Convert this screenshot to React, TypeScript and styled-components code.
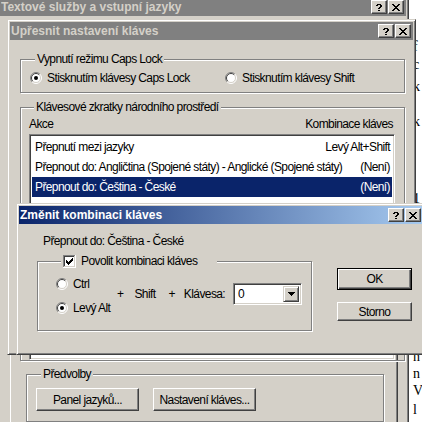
import styled, { createGlobalStyle } from 'styled-components';

const GlobalStyle = createGlobalStyle`
  html, body {
    margin: 0;
    padding: 0;
  }
  body {
    width: 422px;
    height: 422px;
    overflow: hidden;
    background: #fff;
    font-family: "Liberation Sans", Arial, sans-serif;
    font-size: 12px;
    letter-spacing: -0.6px;
    color: #000;
  }
`;

const Desktop = styled.div`
  position: relative;
  width: 422px;
  height: 422px;
  overflow: hidden;
  background: #fff;
`;

const Document = styled.div`
  padding: 0 0 0 413px;
  font-family: "Liberation Serif", "Times New Roman", serif;
  font-size: 14px;
  line-height: 17px;
  letter-spacing: 0;
  white-space: nowrap;
`;

const DocLine = styled.div<{ $mt: number }>`
  margin-top: ${(p) => p.$mt}px;
`;

const Window = styled.div<{ $x: number; $y: number; $w: number; $h: number }>`
  position: absolute;
  left: ${(p) => p.$x}px;
  top: ${(p) => p.$y}px;
  width: ${(p) => p.$w}px;
  height: ${(p) => p.$h}px;
  box-sizing: border-box;
  display: flex;
  flex-direction: column;
  padding: 2px;
  background: #d4d0c8;
  border: 1px solid;
  border-color: #d4d0c8 #404040 #404040 #d4d0c8;
  box-shadow: inset 1px 1px #fff, inset -1px -1px #808080;
`;

const TitleBar = styled.div<{ $active?: boolean }>`
  flex: none;
  height: 18px;
  margin-bottom: 1px;
  padding: 0 2px 0 1px;
  display: flex;
  align-items: center;
  background: ${(p) => (p.$active ? 'linear-gradient(to right, #0a246a, #a6caf0)' : '#808080')};
  color: ${(p) => (p.$active ? '#fff' : '#d4d0c8')};
  font-size: 12px;
  font-weight: bold;
  letter-spacing: 0;
`;

const TitleText = styled.span`
  flex: 1;
  white-space: nowrap;
  overflow: hidden;
`;

const CaptionButtons = styled.div`
  display: flex;
  gap: 1px;
`;

const CaptionButton = styled.div`
  width: 16px;
  height: 14px;
  box-sizing: border-box;
  display: flex;
  align-items: center;
  justify-content: center;
  background: #d4d0c8;
  border: 1px solid;
  border-color: #fff #404040 #404040 #fff;
  box-shadow: inset -1px -1px #808080;
`;

const Client = styled.div<{ $pad: string }>`
  flex: 1;
  display: flex;
  flex-direction: column;
  padding: ${(p) => p.$pad};
  min-height: 0;
`;

const Group = styled.fieldset<{ $mt?: number; $pad: string }>`
  margin: ${(p) => p.$mt ?? 0}px 0 0 0;
  padding: ${(p) => p.$pad};
  min-width: 0;
  box-sizing: border-box;
  border: 1px solid #808080;
  box-shadow: inset 1px 1px #fff, 1px 1px #fff;
`;

const Legend = styled.legend<{ $pr?: number }>`
  margin-left: 5px;
  padding: 0 ${(p) => p.$pr ?? 2}px 0 2px;
  height: 14px;
  line-height: 14px;
  background: #d4d0c8;
  display: flex;
  align-items: center;
  gap: 5px;
`;

const RadioRow = styled.div`
  display: flex;
  align-items: center;
  height: 16px;
`;

const Option = styled.label<{ $w?: number }>`
  display: flex;
  align-items: center;
  gap: 5px;
  width: ${(p) => (p.$w ? `${p.$w}px` : 'auto')};
  height: 14px;
  line-height: 14px;
  white-space: nowrap;
`;

const ListHeader = styled.div`
  display: flex;
  justify-content: space-between;
  height: 14px;
  line-height: 14px;
  padding-right: 2px;
`;

const ListBox = styled.div`
  margin-top: 3px;
  height: 220px;
  background: #fff;
  border: 1px solid;
  border-color: #808080 #fff #fff #808080;
  box-shadow: inset 1px 1px #404040, inset -1px -1px #d4d0c8;
  padding: 2px;
`;

const ListRow = styled.div<{ $selected?: boolean }>`
  height: 20px;
  display: flex;
  align-items: center;
  justify-content: space-between;
  padding: 0 2px 0 3px;
  white-space: nowrap;
  background: ${(p) => (p.$selected ? '#0a246a' : 'transparent')};
  color: ${(p) => (p.$selected ? '#fff' : '#000')};
`;

const TabPanel = styled.div`
  flex: 1;
  display: flex;
  flex-direction: column;
  padding: 0 13px 0 15px;
  border: 1px solid;
  border-color: #fff #404040 #404040 #fff;
  box-shadow: inset -1px -1px #808080;
`;

const PanelSpacer = styled.div`
  height: 343px;
  flex: none;
`;

const ButtonRow = styled.div`
  display: flex;
  gap: 14px;
`;

const PushButton = styled.div<{ $w: number; $h?: number; $default?: boolean }>`
  width: ${(p) => p.$w}px;
  height: ${(p) => p.$h ?? 23}px;
  box-sizing: border-box;
  display: flex;
  align-items: center;
  justify-content: center;
  white-space: nowrap;
  background: #d4d0c8;
  border: 1px solid;
  border-color: ${(p) => (p.$default ? '#000' : '#fff #404040 #404040 #fff')};
  box-shadow: ${(p) =>
    p.$default
      ? 'inset 1px 1px #fff, inset -1px -1px #404040, inset -2px -2px #808080'
      : 'inset -1px -1px #808080'};
`;

const DialogBody = styled.div`
  display: flex;
  padding: 9px 0 0 18px;
`;

const LeftColumn = styled.div`
  width: 275px;
  display: flex;
  flex-direction: column;
`;

const Caption = styled.div`
  margin-left: 6px;
  height: 14px;
  line-height: 14px;
`;

const KeyRow = styled.div`
  display: flex;
  align-items: center;
`;

const ModifierColumn = styled.div`
  width: 55px;
  display: flex;
  flex-direction: column;
  gap: 10px;
`;

const KeyParts = styled.div`
  display: flex;
  align-items: center;
  margin-bottom: 4px;
`;

const KeyText = styled.span<{ $ml: number }>`
  margin-left: ${(p) => p.$ml}px;
  white-space: nowrap;
`;

const Combo = styled.div`
  margin-left: 8px;
  width: 69px;
  height: 22px;
  box-sizing: border-box;
  display: flex;
  align-items: center;
  padding: 2px;
  background: #fff;
  border: 1px solid;
  border-color: #808080 #fff #fff #808080;
  box-shadow: inset 1px 1px #404040, inset -1px -1px #d4d0c8;
`;

const ComboValue = styled.span`
  flex: 1;
  padding-left: 2px;
`;

const DropButton = styled.div`
  width: 16px;
  height: 100%;
  box-sizing: border-box;
  display: flex;
  align-items: center;
  justify-content: center;
  background: #d4d0c8;
  border: 1px solid;
  border-color: #d4d0c8 #404040 #404040 #d4d0c8;
  box-shadow: inset 1px 1px #fff, inset -1px -1px #808080;
`;

const RightColumn = styled.div`
  margin-left: 25px;
  padding-top: 34px;
  display: flex;
  flex-direction: column;
  gap: 12px;
`;

const HelpGlyph = () => (
  <svg width="6" height="7" viewBox="0 0 6 7" shapeRendering="crispEdges">
    <path d="M1 0h4v1H1zM0 1h2v1H0zM4 1h2v2H4zM3 3h2v1H3zM2 4h2v1H2zM2 6h2v1H2z" fill="#000" />
  </svg>
);

const CloseGlyph = () => (
  <svg width="8" height="7" viewBox="0 0 8 7" shapeRendering="crispEdges">
    <path
      d="M0 0h2v1H0zM6 0h2v1H6zM1 1h2v1H1zM5 1h2v1H5zM2 2h4v1H2zM3 3h2v1H3zM2 4h4v1H2zM1 5h2v1H1zM5 5h2v1H5zM0 6h2v1H0zM6 6h2v1H6z"
      fill="#000"
    />
  </svg>
);

const DropArrow = () => (
  <svg width="7" height="4" viewBox="0 0 7 4" shapeRendering="crispEdges">
    <path d="M0 0h7v1H0zM1 1h5v1H1zM2 2h3v1H2zM3 3h1v1H3z" fill="#000" />
  </svg>
);

const Radio = ({ checked }: { checked?: boolean }) => (
  <svg width="12" height="12" viewBox="0 0 12 12">
    <circle cx="6" cy="6" r="5" fill="#fff" />
    <path d="M2.1 9.9A5.5 5.5 0 0 1 9.9 2.1" fill="none" stroke="#808080" />
    <path d="M2.8 9.2A4.5 4.5 0 0 1 9.2 2.8" fill="none" stroke="#404040" />
    <path d="M9.9 2.1A5.5 5.5 0 0 1 2.1 9.9" fill="none" stroke="#fff" />
    <path d="M9.2 2.8A4.5 4.5 0 0 1 2.8 9.2" fill="none" stroke="#d4d0c8" />
    {checked && <circle cx="6" cy="6" r="2" fill="#000" />}
  </svg>
);

const CheckBox = () => (
  <svg width="13" height="13" viewBox="0 0 13 13" shapeRendering="crispEdges">
    <rect x="0" y="0" width="13" height="13" fill="#fff" />
    <path d="M0 0h12v1H1v11H0z" fill="#808080" />
    <path d="M1 1h10v1H2v9H1z" fill="#404040" />
    <path d="M12 0h1v13H0v-1h12z" fill="#fff" />
    <path d="M11 1h1v11H1v-1h10z" fill="#d4d0c8" />
    <path
      d="M9 3h1v1H9zM8 4h2v1H8zM3 5h1v1H3zM7 5h3v1H7zM3 6h2v1H3zM6 6h3v1H6zM3 7h5v1H3zM4 8h3v1H4zM5 9h1v1H5z"
      fill="#000"
    />
  </svg>
);

const Caption3Buttons = () => (
  <CaptionButtons>
    <CaptionButton>
      <HelpGlyph />
    </CaptionButton>
    <CaptionButton>
      <CloseGlyph />
    </CaptionButton>
  </CaptionButtons>
);

export default function App() {
  return (
    <Desktop>
      <GlobalStyle />
      <Document>
        <DocLine $mt={38}>f</DocLine>
        <DocLine $mt={1}>c</DocLine>
        <DocLine $mt={5}>k</DocLine>
        <DocLine $mt={18}>k</DocLine>
        <DocLine $mt={60}>1</DocLine>
        <DocLine $mt={141}>n</DocLine>
        <DocLine $mt={0}>n</DocLine>
        <DocLine $mt={0}>V</DocLine>
        <DocLine $mt={2}>l</DocLine>
      </Document>

      <Window $x={-3} $y={-5} $w={412} $h={440}>
        <TitleBar>
          <TitleText>Textové služby a vstupní jazyky</TitleText>
          <Caption3Buttons />
        </TitleBar>
        <Client $pad="6px 8px 0 10px">
          <TabPanel>
            <PanelSpacer />
            <Group $pad="7px 0 10px 9px">
              <Legend>Předvolby</Legend>
              <ButtonRow>
                <PushButton $w={103}>Panel jazyků...</PushButton>
                <PushButton $w={103}>Nastavení kláves...</PushButton>
              </ButtonRow>
            </Group>
          </TabPanel>
        </Client>
      </Window>

      <Window $x={7} $y={19} $w={409} $h={336}>
        <TitleBar>
          <TitleText>Upřesnit nastavení kláves</TitleText>
          <Caption3Buttons />
        </TitleBar>
        <Client $pad="11px 8px 0 10px">
          <Group $pad="4px 0 6px 9px">
            <Legend>Vypnutí režimu Caps Lock</Legend>
            <RadioRow>
              <Option $w={195}>
                <Radio checked />
                Stisknutím klávesy Caps Lock
              </Option>
              <Option>
                <Radio />
                Stisknutím klávesy Shift
              </Option>
            </RadioRow>
          </Group>
          <Group $mt={7} $pad="3px 9px 0 8px">
            <Legend>Klávesové zkratky národního prostředí</Legend>
            <ListHeader>
              <span>Akce</span>
              <span>Kombinace kláves</span>
            </ListHeader>
            <ListBox>
              <ListRow>
                <span>Přepnutí mezi jazyky</span>
                <span>Levý Alt+Shift</span>
              </ListRow>
              <ListRow>
                <span>Přepnout do: Angličtina (Spojené státy) - Anglické (Spojené státy)</span>
                <span>(Není)</span>
              </ListRow>
              <ListRow $selected>
                <span>Přepnout do: Čeština - České</span>
                <span>(Není)</span>
              </ListRow>
            </ListBox>
          </Group>
        </Client>
      </Window>

      <Window $x={16} $y={203} $w={410} $h={152}>
        <TitleBar $active>
          <TitleText>Změnit kombinaci kláves</TitleText>
          <Caption3Buttons />
        </TitleBar>
        <DialogBody>
          <LeftColumn>
            <Caption>Přepnout do: Čeština - České</Caption>
            <Group $mt={6} $pad="9px 0 15px 18px">
              <Legend $pr={20}>
                <CheckBox />
                Povolit kombinaci kláves
              </Legend>
              <KeyRow>
                <ModifierColumn>
                  <Option>
                    <Radio />
                    Ctrl
                  </Option>
                  <Option>
                    <Radio checked />
                    Levý Alt
                  </Option>
                </ModifierColumn>
                <KeyParts>
                  <KeyText $ml={6}>+</KeyText>
                  <KeyText $ml={11}>Shift</KeyText>
                  <KeyText $ml={13}>+</KeyText>
                  <KeyText $ml={9}>Klávesa:</KeyText>
                  <Combo>
                    <ComboValue>0</ComboValue>
                    <DropButton>
                      <DropArrow />
                    </DropButton>
                  </Combo>
                </KeyParts>
              </KeyRow>
            </Group>
          </LeftColumn>
          <RightColumn>
            <PushButton $w={75} $h={22} $default>
              OK
            </PushButton>
            <PushButton $w={75} $h={19}>
              Storno
            </PushButton>
          </RightColumn>
        </DialogBody>
      </Window>
    </Desktop>
  );
}
